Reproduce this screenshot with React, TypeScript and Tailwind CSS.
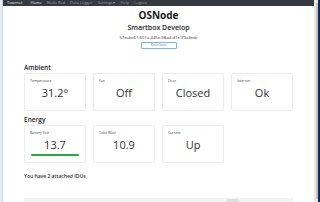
import React from 'react';

const ambient = [
    { label: 'Temperature', value: '31.2°' },
    { label: 'Fan', value: 'Off' },
    { label: 'Door', value: 'Closed' },
    { label: 'Internet', value: 'Ok' },
];

const energy = [
    { label: 'Battery Volt', value: '13.7', bar: true },
    { label: 'Total Watt', value: '10.9' },
    { label: 'Current', value: 'Up' },
];

function StatCard({ label, value, bar }: { label: string; value: string; bar?: boolean }) {
    return (
        <div className="h-[38px] border border-[#ececec] rounded-[2px] bg-white flex flex-col px-[5px] pt-[5px]">
            <span className="text-[3.5px] leading-[4px] text-[#444]">{label}</span>
            <span className="text-[11px] leading-[14px] mt-[3px] text-center text-[#333]">{value}</span>
            {bar && <div className="h-[2px] mt-[2px] mx-[1px] rounded-full bg-[#28a745]" />}
        </div>
    );
}

export default function App() {
    return (
        <div className="w-[320px] h-[202px] flex overflow-hidden bg-white" style={{ fontFamily: '"Open Sans", "Noto Sans", sans-serif' }}>
            {/* other window edge */}
            <div className="w-[3px] bg-[#e3ecf6] border-r border-[#c9d6e6]" />

            <div className="flex-1 flex flex-col">
                {/* Navbar */}
                <nav className="h-[10px] bg-[#343a40] flex items-center px-[4px] gap-[5px] text-[4px] text-[#9a9da0]">
                    <span className="text-[#e8e8e8] mr-[3px]">Towrnet</span>
                    <span className="text-[#e8e8e8]">Home</span>
                    <span>Node Red</span>
                    <span>Data Logger</span>
                    <span>Settings ▾</span>
                    <span>Help</span>
                    <span>Logout</span>
                </nav>

                {/* Header */}
                <div className="flex flex-col items-center text-[#222]">
                    <h1 className="text-[10px] leading-[12px] font-bold mt-[3px]">OSNode</h1>
                    <h2 className="text-[7px] leading-[10px] font-semibold mt-[2px]">Smartbox Develop</h2>
                    <p className="text-[4.2px] leading-[5px] mt-[2px] text-[#333]">57eabc61-601a-445e-98ad-d1e1f9a3edc</p>
                    <button className="mt-[2px] h-[7px] w-[36px] border border-[#7fb2e5] rounded-[1px] text-[3px] text-[#3c7fc4] leading-none">Reset Stats</button>
                </div>

                {/* Content */}
                <div className="px-[21px] mt-[15px] text-[#222]">
                    <h3 className="text-[6.5px] leading-[8px] font-semibold">Ambient</h3>
                    <div className="grid grid-cols-4 gap-[7px] mt-[1px]">
                        {ambient.map(c => <StatCard key={c.label} {...c} />)}
                    </div>

                    <h3 className="text-[6.5px] leading-[8px] font-semibold mt-[5px]">Energy</h3>
                    <div className="grid grid-cols-4 gap-[7px] mt-[1px]">
                        {energy.map(c => <StatCard key={c.label} {...c} />)}
                    </div>

                    <p className="text-[5px] leading-[6px] font-semibold mt-[10px] text-[#333]">You have 2 attached IDUs</p>

                    <div className="h-[6px] mt-[19px] bg-[#f2f2f2] rounded-t-[1px] relative">
                        <div className="absolute left-[203px] top-[1px] w-[12px] h-[5px] bg-[#e0e0e0] rounded-[1px]" />
                    </div>
                </div>
            </div>

            {/* scrollbar */}
            <div className="w-[4px] bg-[#e9e9e9] flex justify-end py-[3px]">
                <div className="w-[2px] bg-[#c2c2c2]" />
            </div>
            <div className="w-[2px] bg-[#0c2d5c]" />
        </div>
    );
}
